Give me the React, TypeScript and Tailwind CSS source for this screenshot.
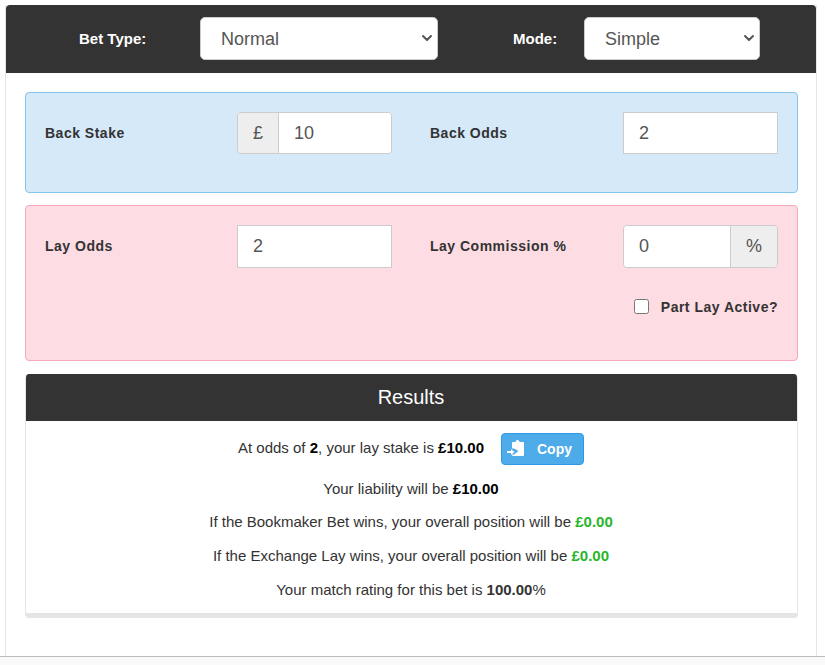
import { ChevronDown } from "lucide-react";

const font = "font-['Liberation_Sans',Arial,sans-serif]";

const labelClass = "text-[14px] font-bold tracking-[0.5px] text-[#333]";
const inputClass =
    "h-full w-full min-w-0 bg-white px-[15px] text-[18px] text-[#555] outline-none";
const selectClass =
    "h-[43px] w-full appearance-none rounded-[5px] border border-[#ccc] bg-white pt-[2px] pl-[20px] text-[18px] text-[#555]";

const CopyIcon = () => (
    <svg width="17" height="17" viewBox="0 0 17 17" className="mb-px shrink-0" fill="white">
        <path d="M6 2h2.500c.1-1.100.9-2 2-2s1.900.9 2 2H16a1 1 0 0 1 1 1v12a1 1 0 0 1-1 1H6a1 1 0 0 1-1-1v-.5h2l4.500-3.500L7 8.500H5V3a1 1 0 0 1 1-1z" />
        <path d="M0 11h4V9l3.500 3L4 15v-2H0z" />
    </svg>
);

const Select = ({ value, width }: { value: string; width: string }) => (
    <div className={`relative self-start mt-[12px] ${width}`}>
        <select className={selectClass}>
            <option>{value}</option>
        </select>
        <ChevronDown
            size={16}
            strokeWidth={3}
            className="pointer-events-none absolute top-[13px] right-[3px] text-[#555]"
        />
    </div>
);

const Results = () => (
    <div className="mt-[13px] overflow-hidden rounded-[4px] border-x border-[#e5e5e5] border-b-[5px] bg-white">
        <h2 className="flex h-[47px] items-center justify-center bg-[#333] pr-[1px] pb-[2px] text-[20px] text-white">
            Results
        </h2>
        <div className="flex flex-col items-center pr-[1px] text-[15px] text-[#333]">
            <div className="mt-[12px] flex h-[32px] items-center">
                <p className="mb-[2px]">
                    At odds of <b className="text-black">2</b>, your lay stake is{" "}
                    <b className="text-black">£10.00</b>
                </p>
                <button className="ml-[17px] flex h-[32px] w-[83px] items-center rounded-[4px] border border-[#2e9ae6] bg-[#4dabe9] pl-[5px] text-[14px] font-bold text-white">
                    <CopyIcon />
                    <span className="ml-[13px]">Copy</span>
                </button>
            </div>
            <p className="mt-[15px] leading-[17px]">
                Your liability will be <b className="text-black">£10.00</b>
            </p>
            <p className="mt-[16px] leading-[17px]">
                If the Bookmaker Bet wins, your overall position will be{" "}
                <b className="text-[#28b62c]">£0.00</b>
            </p>
            <p className="mt-[17px] leading-[17px]">
                If the Exchange Lay wins, your overall position will be{" "}
                <b className="text-[#28b62c]">£0.00</b>
            </p>
            <p className="mt-[17px] mb-[15px] leading-[17px]">
                Your match rating for this bet is <b>100.00</b>%
            </p>
        </div>
    </div>
);

export default function App() {
    return (
        <div className={`${font} h-[665px] w-[825px] overflow-hidden bg-white`}>
            <div className="h-[5px]" />
            <div className="ml-[5px] h-[651px] w-[812px] border-x border-[#e5e5e5]">
                <div className="flex h-[68px] items-center rounded-t-[4px] bg-[#333] text-white">
                    <label className="ml-[73px] w-[121px] text-[15px] font-bold">Bet Type:</label>
                    <Select value="Normal" width="w-[238px]" />
                    <label className="ml-[75px] w-[71px] text-[15px] font-bold">Mode:</label>
                    <Select value="Simple" width="w-[176px]" />
                </div>
                <div className="mt-[19px] mr-[18px] ml-[19px]">
                    <div className="h-[101px] rounded-[4px] border border-[#85c5f0] bg-[#d5e9f9] pt-[19px] pl-[19px]">
                        <div className="grid grid-cols-[192px_155px_231px_155px] items-center">
                            <span className={labelClass}>Back Stake</span>
                            <div className="flex h-[42px] overflow-hidden rounded-[4px] border border-[#ccc]">
                                <span className="flex w-[41px] shrink-0 items-center justify-center border-r border-[#ccc] bg-[#eee] text-[18px] text-[#555]">£</span>
                                <input className={inputClass} defaultValue="10" />
                            </div>
                            <span className={`${labelClass} ml-[38px]`}>Back Odds</span>
                            <div className="h-[42px] border border-[#ccc]">
                                <input className={inputClass} defaultValue="2" />
                            </div>
                        </div>
                    </div>
                    <div className="mt-[12px] h-[156px] rounded-[4px] border border-[#f9a8bb] bg-[#fddce3] pt-[19px] pr-[19px] pl-[19px]">
                        <div className="grid grid-cols-[192px_155px_231px_155px] items-center">
                            <span className={labelClass}>Lay Odds</span>
                            <div className="h-[43px] border border-[#ccc]">
                                <input className={inputClass} defaultValue="2" />
                            </div>
                            <span className={`${labelClass} ml-[38px]`}>Lay Commission %</span>
                            <div className="flex h-[43px] overflow-hidden rounded-[4px] border border-[#ccc]">
                                <input className={inputClass} defaultValue="0" />
                                <span className="flex w-[47px] shrink-0 items-center justify-center border-l border-[#ccc] bg-[#eee] text-[18px] text-[#555]">%</span>
                            </div>
                        </div>
                        <div className="mt-[29px] flex items-center justify-end">
                            <input type="checkbox" className="m-0 mb-[2px] size-[15px]" />
                            <span className={`${labelClass} ml-[12px]`}>Part Lay Active?</span>
                        </div>
                    </div>
                    <Results />
                </div>
            </div>
            <div className="h-[9px] border-t border-[#bbb] bg-[#f9f9f9]" />
        </div>
    );
}
